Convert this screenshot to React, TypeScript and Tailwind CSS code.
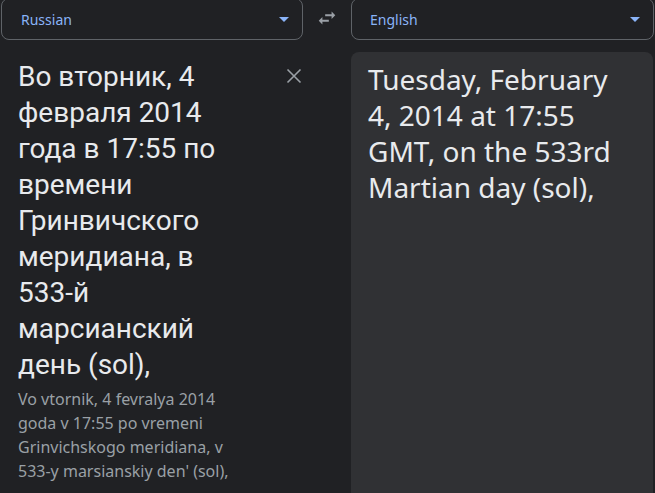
import React from "react";

const Caret = () => (
  <svg width="10" height="5" viewBox="0 0 10 5" className="shrink-0">
    <path d="M0 0h10L5 5z" fill="#8ab4f8" />
  </svg>
);

export default function App() {
  return (
    <div className="w-[655px] h-[493px] overflow-hidden bg-[#202124] relative" style={{ fontFamily: '"Noto Sans", "Open Sans", sans-serif' }}>
      <div className="flex items-start h-[40px] mt-[-2px]">
        <div className="ml-[1px] w-[302px] h-[42px] rounded-lg border border-[#5f6368] flex items-center pl-[19px] pr-[13px] justify-between">
          <span className="text-[14px] text-[#8ab4f8]">Russian</span>
          <Caret />
        </div>
        <div className="w-[48px] h-[40px] flex items-center justify-center">
          <svg width="22" height="22" viewBox="0 0 24 24" className="mt-[-1px]">
            <path d="M6.99 11L3 15l3.99 4v-3H14v-2H6.99v-3zM21 9l-3.99-4v3H10v2h7.01v3L21 9z" fill="#9aa0a6" />
          </svg>
        </div>
        <div className="w-[303px] h-[42px] rounded-lg border border-[#5f6368] flex items-center pl-[18px] pr-[13px] justify-between">
          <span className="text-[14px] text-[#8ab4f8]">English</span>
          <Caret />
        </div>
      </div>
      <div className="flex mt-[14px]">
        <div className="w-[351px] flex pl-[18px] pt-[7px]">
          <div className="w-[225px]">
            <div className="text-[28px] leading-[36px] text-[#e8eaed]" style={{ fontFamily: 'Roboto, "Noto Sans", sans-serif' }}>
              Во вторник, 4 февраля 2014 года в 17:55 по времени Гринвичского меридиана, в 533-й марсианский день (sol),
            </div>
            <div className="text-[16px] leading-[24px] text-[#9aa0a6] mt-[4px]">
              Vo vtornik, 4 fevralya 2014 goda v 17:55 po vremeni Grinvichskogo meridiana, v 533-y marsianskiy den' (sol),
            </div>
          </div>
          <div className="ml-[43px] mt-[9px]">
            <svg width="16" height="16" viewBox="0 0 16 16">
              <path d="M1.5 1.5L14.5 14.5M14.5 1.5L1.5 14.5" stroke="#9aa0a6" strokeWidth="1.6" />
            </svg>
          </div>
        </div>
        <div className="w-[302px] h-[460px] rounded-lg bg-[#303134] pl-[17px] pt-[9px]">
          <div className="w-[250px] text-[28px] leading-[36px] text-[#e8eaed]">
            Tuesday, February 4, 2014 at 17:55 GMT, on the 533rd Martian day (sol),
          </div>
        </div>
      </div>
    </div>
  );
}
